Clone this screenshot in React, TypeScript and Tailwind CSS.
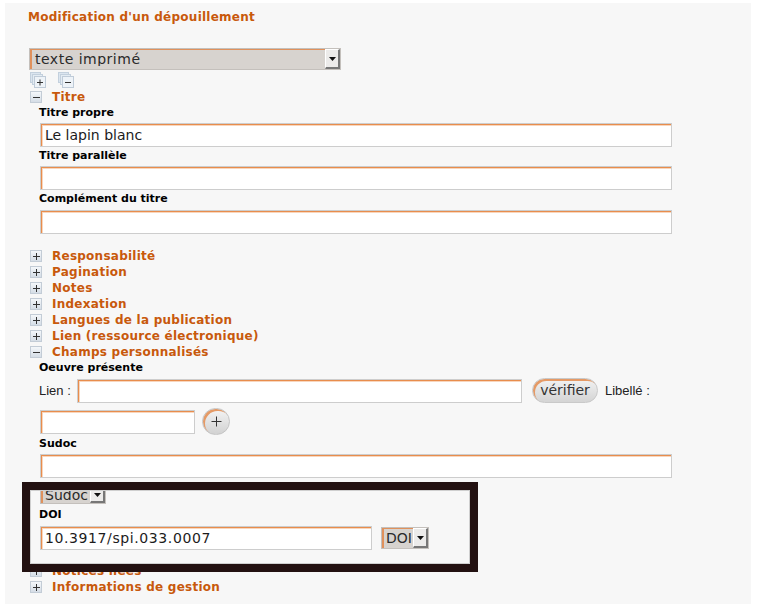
import React from 'react'

const ORANGE = 'text-[#c8590c]'

const inputCls =
  'block h-[24px] bg-white border border-[#cdcdcd] shadow-[inset_1px_1px_0_#e88d4d,inset_2px_2px_0_#f8d6bd] px-[4px] text-[14px] text-[#1c1c1c] outline-none'

function Arrow() {
  return (
    <svg width="7" height="4" viewBox="0 0 7 4">
      <path d="M0 0h7L3.5 4z" fill="#111" />
    </svg>
  )
}

function DropBtn({ h }: { h: number }) {
  return (
    <span
      className="flex items-center justify-center w-[15px] shrink-0 bg-[#ecebea] border-t border-l border-t-white border-l-white border-b-2 border-r-2 border-b-[#777] border-r-[#777]"
      style={{ height: h }}
    >
      <Arrow />
    </span>
  )
}

function Select({ label, w, h, wide }: { label: string; w: number; h: number; wide?: boolean }) {
  return (
    <div
      className="flex items-center justify-between bg-[#d7d3cf] border border-[#c4c0bc] shadow-[inset_2px_1px_0_#e0915c] overflow-hidden"
      style={{ width: w, height: h }}
    >
      <span
        className={`pl-[4px] text-[14px] text-[#2a2a2a] whitespace-nowrap overflow-hidden leading-none ${wide ? 'tracking-[0.5px] pl-[5px]' : ''}`}
      >
        {label}
      </span>
      <DropBtn h={h - 2} />
    </div>
  )
}

function Toggle({ open }: { open: boolean }) {
  return (
    <span className="relative flex items-center justify-center w-[12px] h-[12px] bg-gradient-to-b from-[#f4f7fa] to-[#d5dde6] border border-[#c3ccd6] shrink-0">
      <span className="absolute w-[7px] h-[1px] bg-[#333]" />
      {!open && <span className="absolute w-[1px] h-[7px] bg-[#333]" />}
    </span>
  )
}

function StackIcon({ plus }: { plus: boolean }) {
  return (
    <svg width="18" height="16" viewBox="0 0 18 16">
      <rect x="0.5" y="0.5" width="10" height="10" fill="#dbe5ef" stroke="#c3d0dd" />
      <rect x="2.5" y="2.5" width="10" height="10" fill="#e4ecf3" stroke="#c3d0dd" />
      <rect x="4.5" y="4.5" width="11" height="11" fill="#eef3f8" stroke="#bfcbd8" />
      <path d="M7 10.5h6" stroke="#333" />
      {plus && <path d="M10 7.5v6" stroke="#333" />}
    </svg>
  )
}

function Section({ title, open }: { title: string; open?: boolean }) {
  return (
    <div className="flex items-center h-[16px] pl-[25px]">
      <Toggle open={!!open} />
      <span className={`ml-[10px] text-[12px] tracking-[0.25px] font-bold ${ORANGE} leading-[16px] whitespace-nowrap`}>
        {title}
      </span>
    </div>
  )
}

function Label({ children }: { children: React.ReactNode }) {
  return <div className="pl-[34px] h-[16px] text-[11px] leading-[16px] font-bold text-black">{children}</div>
}

export default function App() {
  return (
    <div className="min-h-[605px] bg-white pt-[3px] pl-[5px]" style={{ fontFamily: '"DejaVu Sans", Verdana, sans-serif' }}>
      <div className="relative w-[746px] h-[601px] bg-[#f7f7f7]">
        <div className={`pl-[23px] pt-[6px] text-[12px] tracking-[0.25px] leading-[16px] font-bold ${ORANGE}`}>
          Modification d'un dépouillement
        </div>

        <div className="mt-[23px] ml-[24px]">
          <Select label="texte imprimé" w={312} h={22} wide />
        </div>

        <div className="flex items-center gap-[10px] mt-[2px] ml-[25px] h-[16px]">
          <StackIcon plus />
          <StackIcon plus={false} />
        </div>

        <div className="mt-[1px]">
          <Section title="Titre" open />
        </div>

        <Label>Titre propre</Label>
        <div className="mt-[2px] ml-[35px]">
          <input className={`${inputCls} w-[632px]`} defaultValue="Le lapin blanc" />
        </div>
        <div className="mt-[1px]">
          <Label>Titre parallèle</Label>
        </div>
        <div className="mt-[2px] ml-[35px]">
          <input className={`${inputCls} w-[632px]`} defaultValue="" />
        </div>
        <div className="mt-[1px]">
          <Label>Complément du titre</Label>
        </div>
        <div className="mt-[3px] ml-[35px]">
          <input className={`${inputCls} w-[632px]`} defaultValue="" />
        </div>

        <div className="mt-[14px]">
          <Section title="Responsabilité" />
          <Section title="Pagination" />
          <Section title="Notes" />
          <Section title="Indexation" />
          <Section title="Langues de la publication" />
          <Section title="Lien (ressource électronique)" />
          <Section title="Champs personnalisés" open />
        </div>

        <Label>Oeuvre présente</Label>

        <div className="flex items-center mt-[2px] ml-[34px] h-[25px]">
          <span className="text-[13px] text-[#222] w-[38px]" style={{ fontFamily: '"Liberation Sans", Arial, sans-serif' }}>
            Lien :
          </span>
          <input className={`${inputCls} w-[445px]`} defaultValue="" />
          <span className="ml-[10px] flex items-center justify-center w-[66px] h-[25px] rounded-full bg-gradient-to-b from-[#f2f2f2] to-[#d4d4d4] border border-[#c9c9c9] shadow-[inset_2px_2px_0_#e59a66] text-[14px] text-[#333]">
            vérifier
          </span>
          <span className="ml-[7px] text-[13px] text-[#222]" style={{ fontFamily: '"Liberation Sans", Arial, sans-serif' }}>
            Libellé :
          </span>
        </div>

        <div className="flex items-center mt-[5px] ml-[35px] h-[27px]">
          <input className={`${inputCls} w-[155px]`} defaultValue="" />
          <span className="ml-[7px] flex items-center justify-center w-[28px] h-[27px] rounded-full bg-gradient-to-b from-[#f4f4f4] to-[#d2d2d2] border border-[#c4c4c4] shadow-[inset_2px_2px_0_#e59a66]">
            <svg width="11" height="11" viewBox="0 0 11 11">
              <path d="M5.5 0.5v10M0.5 5.5h10" stroke="#333" />
            </svg>
          </span>
        </div>

        <div className="mt-[1px]">
          <Label>Sudoc</Label>
        </div>
        <div className="mt-[2px] ml-[35px]">
          <input className={`${inputCls} w-[632px]`} defaultValue="" />
        </div>

        <div className="mt-[8px] ml-[35px]">
          <Select label="Sudoc" w={66} h={18} />
        </div>

        <div className="mt-[3px]">
          <Label>DOI</Label>
        </div>
        <div className="flex items-center mt-[3px] ml-[35px] h-[24px]">
          <input className={`${inputCls} w-[332px] tracking-[0.6px]`} defaultValue="10.3917/spi.033.0007" />
          <div className="ml-[9px]">
            <Select label="DOI" w={48} h={22} />
          </div>
        </div>

        <div className="mt-[13px]">
          <Section title="Notices liées" />
          <Section title="Informations de gestion" />
        </div>

        <div className="absolute left-[17px] top-[479px] w-[456px] h-[90px] border-[8px] border-[#231111] shadow-[inset_0_0_0_1px_#cfcfcf]" />
      </div>
    </div>
  )
}
